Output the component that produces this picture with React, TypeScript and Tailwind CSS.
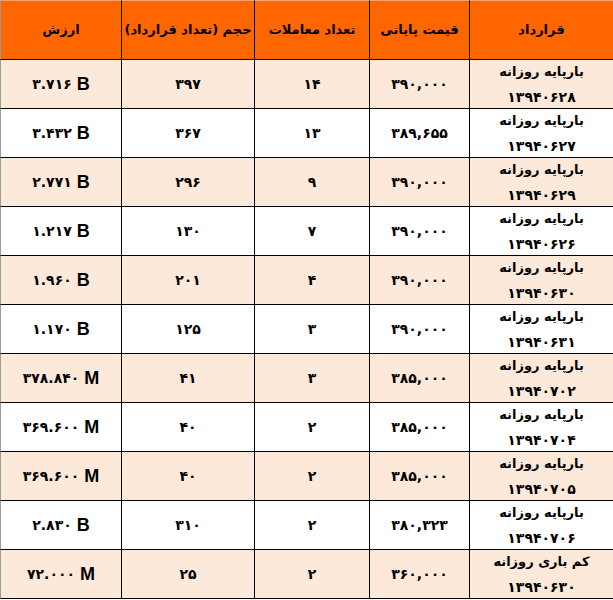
const rows = [
  { value: "۳.۷۱۶", unit: "B", volume: "۳۹۷", count: "۱۴", price: "۳۹۰,۰۰۰", name: "بارپایه روزانه", date: "۱۳۹۴۰۶۲۸" },
  { value: "۳.۴۳۲", unit: "B", volume: "۳۶۷", count: "۱۳", price: "۳۸۹,۶۵۵", name: "بارپایه روزانه", date: "۱۳۹۴۰۶۲۷" },
  { value: "۲.۷۷۱", unit: "B", volume: "۲۹۶", count: "۹", price: "۳۹۰,۰۰۰", name: "بارپایه روزانه", date: "۱۳۹۴۰۶۲۹" },
  { value: "۱.۲۱۷", unit: "B", volume: "۱۳۰", count: "۷", price: "۳۹۰,۰۰۰", name: "بارپایه روزانه", date: "۱۳۹۴۰۶۲۶" },
  { value: "۱.۹۶۰", unit: "B", volume: "۲۰۱", count: "۴", price: "۳۹۰,۰۰۰", name: "بارپایه روزانه", date: "۱۳۹۴۰۶۳۰" },
  { value: "۱.۱۷۰", unit: "B", volume: "۱۲۵", count: "۳", price: "۳۹۰,۰۰۰", name: "بارپایه روزانه", date: "۱۳۹۴۰۶۳۱" },
  { value: "۳۷۸.۸۴۰", unit: "M", volume: "۴۱", count: "۳", price: "۳۸۵,۰۰۰", name: "بارپایه روزانه", date: "۱۳۹۴۰۷۰۲" },
  { value: "۳۶۹.۶۰۰", unit: "M", volume: "۴۰", count: "۲", price: "۳۸۵,۰۰۰", name: "بارپایه روزانه", date: "۱۳۹۴۰۷۰۴" },
  { value: "۳۶۹.۶۰۰", unit: "M", volume: "۴۰", count: "۲", price: "۳۸۵,۰۰۰", name: "بارپایه روزانه", date: "۱۳۹۴۰۷۰۵" },
  { value: "۲.۸۳۰", unit: "B", volume: "۳۱۰", count: "۲", price: "۳۸۰,۳۲۳", name: "بارپایه روزانه", date: "۱۳۹۴۰۷۰۶" },
  { value: "۷۲.۰۰۰", unit: "M", volume: "۲۵", count: "۲", price: "۳۶۰,۰۰۰", name: "کم باری روزانه", date: "۱۳۹۴۰۶۳۰" },
];

const headers = ["قرارداد", "قیمت پایانی", "تعداد معاملات", "حجم (تعداد قرارداد)", "ارزش"];

const fa = { fontFamily: '"DejaVu Sans", sans-serif' };

export default function App() {
  return (
    <div className="w-[613px] h-[600px] bg-white overflow-hidden" style={fa}>
      <div dir="rtl" className="grid grid-cols-[144px_100px_115px_133px_121px] text-black font-bold">
        {headers.map((h, i) => (
          <div
            key={h}
            className={`h-[60px] bg-[#ff6600] border-t border-t-[#f7a36b] border-b border-b-black flex items-center justify-center text-[13px] whitespace-nowrap ${
              i === 4 ? "border-l border-l-[#9a9a9a]" : "border-l border-l-black"
            }`}
          >
            {h}
          </div>
        ))}

        {rows.map((r, idx) => {
          const bg = idx % 2 === 0 ? "bg-[#fde9d9]" : "bg-white";
          const cell = `h-[49px] border-b border-b-black border-l ${bg} flex items-center justify-center`;
          return [
            <div key={`n${idx}`} className={`${cell} border-l-black flex-col !justify-start`}>
              <div className="text-[13px] leading-[26px] -mt-[1px] whitespace-nowrap">{r.name}</div>
              <div className="text-[14px] leading-[24px] whitespace-nowrap">{r.date}</div>
            </div>,
            <div key={`p${idx}`} className={`${cell} border-l-black text-[14px]`}>
              <span dir="ltr">{r.price}</span>
            </div>,
            <div key={`c${idx}`} className={`${cell} border-l-black text-[14px]`}>
              {r.count}
            </div>,
            <div key={`v${idx}`} className={`${cell} border-l-black text-[14px]`}>
              {r.volume}
            </div>,
            <div key={`a${idx}`} className={`${cell} border-l-[#9a9a9a]`}>
              <span dir="ltr" className="flex items-center gap-[5px]">
                <span className="text-[14px]">{r.value}</span>
                <span className="text-[18px] leading-none" style={{ fontFamily: '"Liberation Sans", Arial, sans-serif' }}>
                  {r.unit}
                </span>
              </span>
            </div>,
          ];
        })}
      </div>
    </div>
  );
}
